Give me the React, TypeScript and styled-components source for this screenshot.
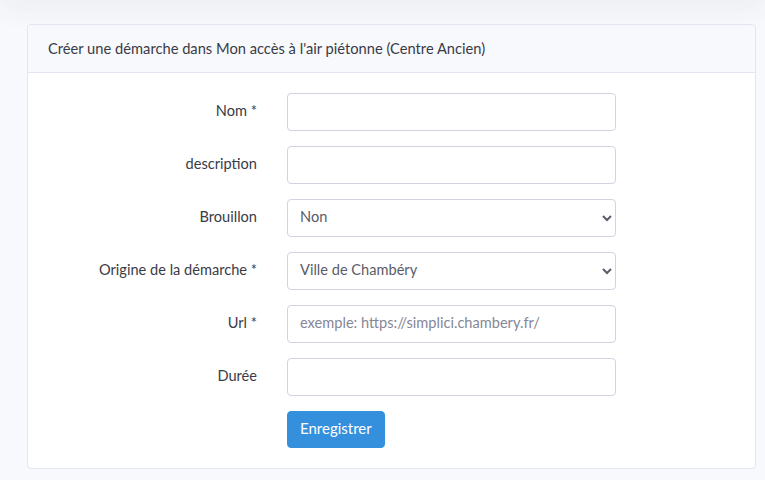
import styled, { createGlobalStyle } from 'styled-components'

const GlobalStyle = createGlobalStyle`
	html, body {
		margin: 0;
		padding: 0;
		background: #f8f9fc;
		font-family: Lato, 'Open Sans', sans-serif;
		color: #3a3b45;
	}
	* {
		box-sizing: border-box;
	}
`

const fields = [
	{ label: 'Nom *', type: 'input' },
	{ label: 'description', type: 'input' },
	{ label: 'Brouillon', type: 'select', options: ['Non', 'Oui'] },
	{ label: 'Origine de la démarche *', type: 'select', options: ['Ville de Chambéry'] },
	{ label: 'Url *', type: 'input', placeholder: 'exemple: https://simplici.chambery.fr/' },
	{ label: 'Durée', type: 'input' },
]

function App() {
	return (
		<S.Page>
			<GlobalStyle />
			<S.Topbar />
			<S.Card>
				<S.Header>Créer une démarche dans Mon accès à l'air piétonne (Centre Ancien)</S.Header>
				<S.Body>
					{fields.map((f) => (
						<S.Row key={f.label}>
							<S.Label>{f.label}</S.Label>
							{f.type === 'select' ? (
								<S.Select defaultValue={f.options?.[0]}>
									{f.options?.map((o) => (
										<option key={o}>{o}</option>
									))}
								</S.Select>
							) : (
								<S.Input placeholder={f.placeholder} />
							)}
						</S.Row>
					))}
					<S.Row>
						<span />
						<S.Actions>
							<S.Button>Enregistrer</S.Button>
						</S.Actions>
					</S.Row>
				</S.Body>
			</S.Card>
		</S.Page>
	)
}
export default App

const Page = styled.div`
	width: 765px;
	height: 480px;
	overflow: hidden;
	padding: 24px 9px 0 27px;
	position: relative;
`
const Topbar = styled.div`
	position: absolute;
	top: -10px;
	left: 0;
	right: 0;
	height: 10px;
	box-shadow: 0 0.15rem 1.75rem 0 rgba(58, 59, 69, 0.15);
`
const Card = styled.div`
	background: #fff;
	border: 1px solid #e3e6f0;
	border-radius: 4px;
`
const Header = styled.div`
	background: #f8f9fc;
	border-bottom: 1px solid #e3e6f0;
	padding: 12px 20px;
	line-height: 23px;
	font-size: 14.7px;
	color: #3a3b45;
	border-radius: 4px 4px 0 0;
`
const Body = styled.div`
	padding: 20px 5px;
`
const Row = styled.div`
	display: grid;
	grid-template-columns: 239px 359px;
	align-items: center;
	margin-bottom: 15px;
	&:last-child {
		margin-bottom: 0;
	}
`
const Label = styled.label`
	text-align: right;
	padding: 0 15px 3px;
	font-size: 14.6px;
	color: #3a3b45;
`
const fieldCss = `
	width: 329px;
	margin: 0 15px;
	height: 38px;
	border: 1px solid #d1d3e2;
	border-radius: 4px;
	padding: 3px 12px 7px;
	font-size: 14.6px;
	font-family: Lato, 'Open Sans', sans-serif;
	color: #5a5c69;
	background: #fff;
	outline: none;
	&::placeholder {
		color: #858796;
	}
`
const Input = styled.input`
	${fieldCss}
`
const Select = styled.select`
	${fieldCss}
	padding: 3px 8px 7px;
`
const Actions = styled.div`
	padding: 0 15px;
`
const Button = styled.button`
	background: #3490dc;
	border: 1px solid #3490dc;
	color: #fff;
	border-radius: 4px;
	height: 37px;
	padding: 0 12px 3px;
	font-size: 15px;
	font-family: Lato, 'Open Sans', sans-serif;
`
const S = { Page, Topbar, Card, Header, Body, Row, Label, Input, Select, Actions, Button }
